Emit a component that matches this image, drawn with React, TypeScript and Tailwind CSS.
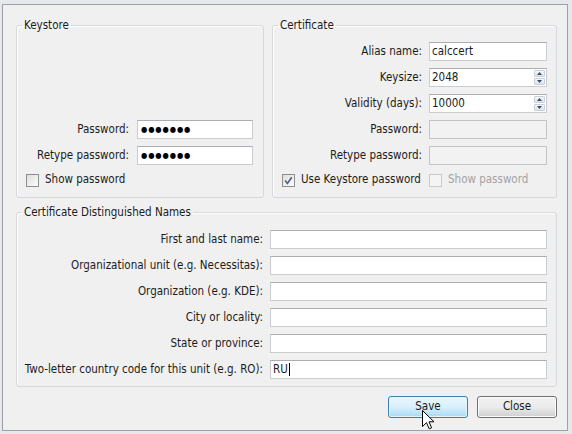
import type { ReactNode } from "react"

const font = "font-['DejaVu_Sans_Condensed','DejaVu_Sans','Liberation_Sans',sans-serif]"

function Spinner() {
  return (
    <div className="absolute right-[1px] top-[1px] bottom-[1px] w-[11px] flex flex-col gap-[1px]">
      <div className="flex-1 flex items-center justify-center bg-linear-to-b from-[#f3f6fa] to-[#dde4ec] border border-[#c9d0d8] rounded-[1px]">
        <svg width="5" height="3" viewBox="0 0 5 3"><path d="M0 3 L2.5 0 L5 3 Z" fill="#3e4d63" /></svg>
      </div>
      <div className="flex-1 flex items-center justify-center bg-linear-to-b from-[#f3f6fa] to-[#dde4ec] border border-[#c9d0d8] rounded-[1px]">
        <svg width="5" height="3" viewBox="0 0 5 3"><path d="M0 0 L2.5 3 L5 0 Z" fill="#3e4d63" /></svg>
      </div>
    </div>
  )
}

function Field({ children, className = "", disabled = false, spin = false }: { children?: ReactNode; className?: string; disabled?: boolean; spin?: boolean }) {
  const tone = disabled
    ? "bg-[#f2f2f2] border-[#c4c4c4]"
    : "bg-white border-[#c9ccd1] border-t-[#abadb3]"
  return (
    <div className={`relative h-[19px] shrink-0 border ${tone} flex items-center pl-[2px] text-[11.5px] text-[#1b1b1b] ${className}`}>
      {children}
      {spin && <Spinner />}
    </div>
  )
}

function Dots() {
  return <span className="pl-[1px] text-[8px] tracking-[0.9px] leading-none text-black">●●●●●●●</span>
}

function Check({ checked = false, disabled = false, label }: { checked?: boolean; disabled?: boolean; label: string }) {
  return (
    <div className="flex items-center h-[14px] mt-[1px]">
      <span
        className={`w-[13px] h-[13px] border flex items-center justify-center ${
          disabled ? "border-[#cacaca] bg-[#f4f4f4]" : "border-[#8e8f8f] bg-linear-to-br from-[#dedede] to-[#fcfcfc]"
        }`}
      >
        {checked && (
          <svg width="9" height="9" viewBox="0 0 9 9">
            <path d="M1.2 4.6 L3.4 7.4 L7.8 1.2" fill="none" stroke="#4a5e86" strokeWidth="1.6" />
          </svg>
        )}
      </span>
      <span className={`ml-[6px] text-[11.5px] ${disabled ? "text-[#a3a3a3]" : "text-[#1b1b1b]"}`}>{label}</span>
    </div>
  )
}

function Row({ label, children, gap }: { label: string; children: ReactNode; gap: string }) {
  return (
    <div className={`flex items-center justify-end ${gap}`}>
      <span className="text-[11.5px] text-[#1b1b1b] whitespace-nowrap">{label}</span>
      {children}
    </div>
  )
}

function Group({ title, className = "", children }: { title: string; className?: string; children: ReactNode }) {
  return (
    <fieldset className={`border border-[#d5d8dc] rounded-[3px] shadow-[inset_1px_1px_0_#ffffff] ${className}`}>
      <legend className="ml-[5px] px-[2px] text-[11.5px] leading-[14px] text-[#1b1b1b]">{title}</legend>
      {children}
    </fieldset>
  )
}

function Cursor() {
  return (
    <svg className="absolute left-[33px] top-[13px]" width="13" height="20" viewBox="0 0 13 20">
      <path d="M0.5 0.5 L0.5 16.5 L4.5 12.7 L7.2 18.8 L9.6 17.8 L7 11.8 L12 11.8 Z" fill="#fff" stroke="#000" strokeWidth="1" strokeLinejoin="round" />
    </svg>
  )
}

export default function App() {
  const distRows = [
    "First and last name:",
    "Organizational unit (e.g. Necessitas):",
    "Organization (e.g. KDE):",
    "City or locality:",
    "State or province:",
  ]

  return (
    <div className={`w-[572px] h-[434px] bg-[#e6e8eb] pt-[4px] pl-[2px] pr-[4px] pb-[3px] ${font}`}>
      <div className="h-full border border-[#9ea2a7] bg-[#f0f0f0] pl-[13px] pr-[10px] pt-[13px] flex flex-col">
        <div className="flex gap-[8px] h-[180px]">
          <Group title="Keystore" className="w-[248px] h-[180px]">
            <div className="flex flex-col gap-[7px] pt-[88px]">
              <Row label="Password:" gap="gap-[8px] pr-[10px]">
                <Field className="w-[116px]"><Dots /></Field>
              </Row>
              <Row label="Retype password:" gap="gap-[8px] pr-[10px]">
                <Field className="w-[116px]"><Dots /></Field>
              </Row>
              <div className="pl-[9px]">
                <Check label="Show password" />
              </div>
            </div>
          </Group>

          <Group title="Certificate" className="flex-1 h-[180px]">
            <div className="flex flex-col gap-[7px] pt-[10px]">
              <Row label="Alias name:" gap="gap-[7px] pr-[9px]">
                <Field className="w-[118px]">calccert</Field>
              </Row>
              <Row label="Keysize:" gap="gap-[7px] pr-[9px]">
                <Field className="w-[118px]" spin>2048</Field>
              </Row>
              <Row label="Validity (days):" gap="gap-[7px] pr-[9px]">
                <Field className="w-[118px]" spin>10000</Field>
              </Row>
              <Row label="Password:" gap="gap-[7px] pr-[9px]">
                <Field className="w-[118px]" disabled />
              </Row>
              <Row label="Retype password:" gap="gap-[7px] pr-[9px]">
                <Field className="w-[118px]" disabled />
              </Row>
              <div className="flex pl-[9px] pr-[9px]">
                <Check checked label="Use Keystore password" />
                <div className="ml-auto w-[118px]">
                  <Check disabled label="Show password" />
                </div>
              </div>
            </div>
          </Group>
        </div>

        <Group title="Certificate Distinguished Names" className="mt-[7px] h-[182px]">
          <div className="flex flex-col gap-[7px] pt-[11px]">
            {distRows.map((label) => (
              <Row key={label} label={label} gap="gap-[7px] pr-[9px]">
                <Field className="w-[277px]" />
              </Row>
            ))}
            <Row label="Two-letter country code for this unit (e.g. RO):" gap="gap-[7px] pr-[9px]">
              <Field className="w-[277px]">
                RU<span className="ml-[1px] w-px h-[13px] bg-black" />
              </Field>
            </Row>
          </div>
        </Group>

        <div className="flex justify-end gap-[9px] mt-[9px]">
          <button className="relative w-[80px] h-[22px] rounded-[3px] border border-[#3c7fb1] bg-linear-to-b from-[#eaf6fd] via-[#d9f0fc] to-[#a7d9f5] text-[11.5px] text-[#1b1b1b] shadow-[inset_0_0_0_1px_#e6f4fc]">
            Save
            <Cursor />
          </button>
          <button className="w-[80px] h-[22px] rounded-[3px] border border-[#707070] bg-linear-to-b from-[#f2f2f2] via-[#ebebeb] to-[#cfcfcf] text-[11.5px] text-[#1b1b1b] shadow-[inset_0_0_0_1px_#fbfbfb]">
            Close
          </button>
        </div>
      </div>
    </div>
  )
}
